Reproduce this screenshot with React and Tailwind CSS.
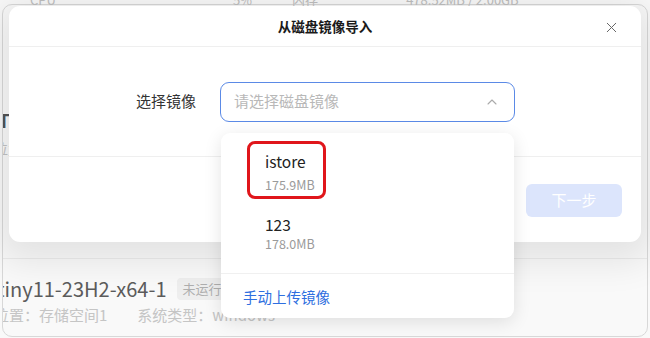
import { ChevronUp, X } from 'lucide-react';

const font = { fontFamily: '"Noto Sans CJK SC", "Noto Sans", sans-serif' };

const images = [
  { name: 'istore', size: '175.9MB', marked: true },
  { name: '123', size: '178.0MB' },
];

export default function App() {
  return (
    <div style={font} className="relative h-[338px] w-[650px] overflow-hidden bg-white">
      {/* page behind the dialog */}
      <div className="-mt-[8px] flex h-[16px] items-center whitespace-nowrap text-[13px] leading-[16px] text-[#c4c4c4]">
        <span className="ml-[30px]">CPU</span>
        <span className="ml-[177px]">5%</span>
        <span className="ml-[40px]">内存</span>
        <span className="ml-[88px]">478.52MB / 2.00GB</span>
      </div>
      <div className="mx-[2px] -mt-[4px] flex h-[333px] flex-col overflow-hidden rounded-[10px] border border-[#dedede]">
        <div className="-ml-[5px] mt-[103px] text-[19px] font-bold leading-[24px] text-[#555]">T</div>
        <div className="-ml-[9px] mt-[6px] text-[14px] leading-[20px] text-[#c8c8c8]">位置</div>
        <div className="mt-[100px] border-t border-[#f1f1f1]" />
        <div className="-ml-[6px] mt-[16px] flex items-center gap-[10px] whitespace-nowrap">
          <span className="text-[20px] leading-[28px] text-[#5e5e5e]">tiny11-23H2-x64-1</span>
          <span className="rounded-[4px] bg-[#f4f4f4] px-[6px] text-[13px] leading-[22px] text-[#b4b4b4]">未运行</span>
        </div>
        <div className="-ml-[9px] mt-[1px] flex gap-[30px] whitespace-nowrap text-[15px] leading-[22px] text-[#cacaca]">
          <span>位置：存储空间1</span>
          <span>系统类型：windows</span>
        </div>
      </div>

      {/* mask */}
      <div className="absolute inset-0 bg-black/[0.025]" />

      {/* dialog */}
      <div className="absolute left-[9px] top-[6px] flex h-[236px] w-[632px] flex-col rounded-[11px] bg-white shadow-[0_8px_36px_12px_rgba(0,0,0,0.09)]">
        <div className="relative flex h-[41px] shrink-0 items-center justify-center border-b border-[#efefef]">
          <span className="text-[13.5px] font-bold text-[#1a1a1a]">从磁盘镜像导入</span>
          <X size={17} strokeWidth={1.4} className="absolute right-[21px] top-[13px] text-[#666]" />
        </div>
        <div className="flex h-[110px] shrink-0 items-center border-b border-[#efefef] pl-[127px]">
          <span className="w-[60px] shrink-0 whitespace-nowrap text-[15px] text-[#333]">选择镜像</span>
          <div className="ml-[24px] flex h-[40px] w-[295px] shrink-0 items-center justify-between rounded-[9px] border border-[#5b8ae6] pl-[13px] pr-[14px]">
            <span className="whitespace-nowrap text-[15px] text-[#b8b8b8]">请选择磁盘镜像</span>
            <ChevronUp size={16} strokeWidth={1.6} className="text-[#aaa]" />
          </div>
        </div>
        <div className="flex flex-1 items-start justify-end pr-[19px] pt-[27px]">
          <button className="h-[33px] w-[96px] rounded-[6px] bg-[#dce5fc] text-[15px] text-white">下一步</button>
        </div>
      </div>

      {/* dropdown */}
      <div className="absolute left-[221px] top-[133px] flex h-[185px] w-[293px] flex-col rounded-[9px] bg-white shadow-[0_4px_18px_rgba(0,0,0,0.11)]">
        <div className="pt-[8px]">
          {images.map((img) =>
            img.marked ? (
              <div key={img.name} className="ml-[26px] h-[58px] w-[79px] rounded-[8px] border-[3px] border-[#e0161b] pl-[15px] pt-[7px]">
                <div className="text-[15.5px] leading-[20px] text-[#222]">{img.name}</div>
                <div className="mt-[5px] text-[12.5px] leading-[18px] text-[#9a9a9a]">{img.size}</div>
              </div>
            ) : (
              <div key={img.name} className="ml-[44px] mt-[15px]">
                <div className="text-[15.5px] leading-[20px] text-[#222]">{img.name}</div>
                <div className="mt-[1px] text-[12.5px] leading-[18px] text-[#9a9a9a]">{img.size}</div>
              </div>
            )
          )}
        </div>
        <div className="mt-[20px] whitespace-nowrap border-t border-[#f0f0f0] pl-[22px] pt-[13px] text-[14.5px] leading-[20px] text-[#2f6fe0]">
          手动上传镜像
        </div>
      </div>
    </div>
  );
}
